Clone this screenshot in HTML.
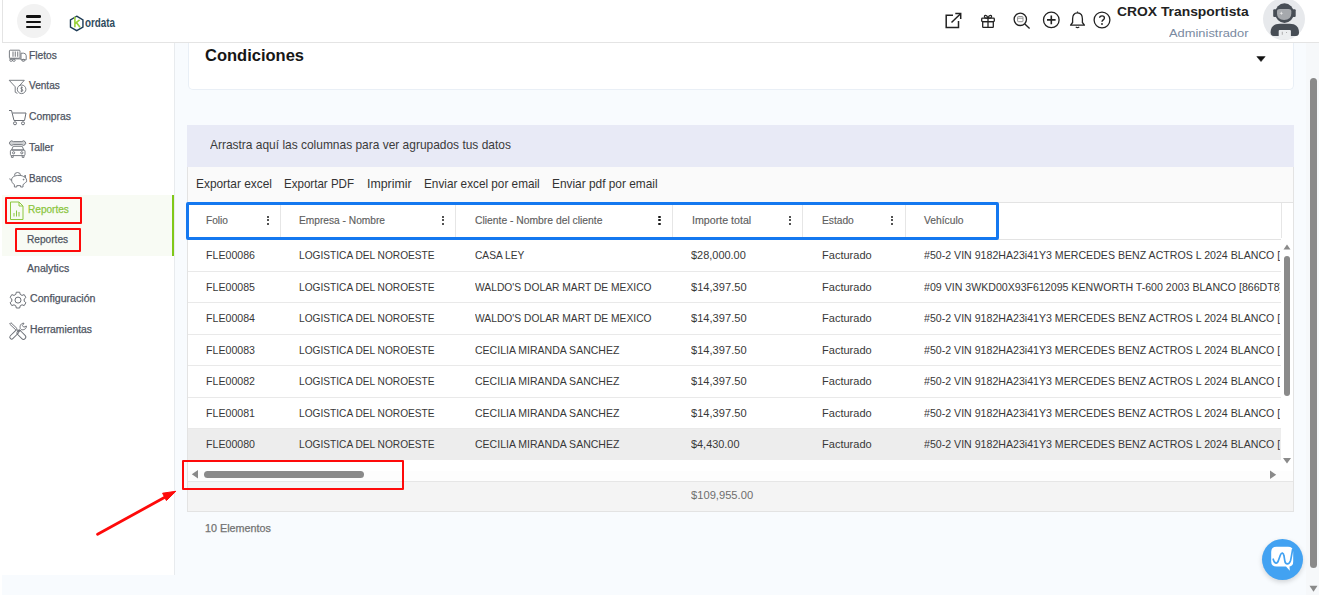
<!DOCTYPE html>
<html><head><meta charset="utf-8">
<style>
*{box-sizing:border-box;margin:0;padding:0}
html,body{width:1323px;height:595px;overflow:hidden;background:#fff;font-family:"Liberation Sans",sans-serif}
.a{position:absolute}
.t{position:absolute;white-space:nowrap;transform-origin:0 0;line-height:1}
.dots{position:absolute;width:3px;height:11px}
.dots i{position:absolute;left:0.3px;width:2.1px;height:2.1px;border-radius:50%;background:#1a1a1a}
.vsep{position:absolute;top:203px;width:1px;height:35px;background:#e6e6e6}
.rl{position:absolute;left:188px;width:1093px;height:1px;background:#e9e9e9}
svg{position:absolute;overflow:visible}
</style></head><body>

<!-- ============ page backgrounds ============ -->
<div class="a" style="left:175px;top:43px;width:1144px;height:552px;background:#f8fbfe"></div>
<div class="a" style="left:1306px;top:43px;width:13px;height:552px;background:#f6f8fa"></div>
<div class="a" style="left:2px;top:575px;width:173px;height:20px;background:#f8fbfe"></div>

<!-- ============ header ============ -->
<div class="a" style="left:2px;top:0;width:1317px;height:43px;background:#fff;border-left:1px solid #e4e4e4;border-bottom:1px solid #e4e4e4"></div>
<div class="a" style="left:17px;top:4px;width:34px;height:34px;border-radius:50%;background:#f2f2f2"></div>
<div class="a" style="left:26.2px;top:15.2px;width:15px;height:2.6px;background:#111;border-radius:1.3px"></div>
<div class="a" style="left:26.2px;top:20.5px;width:15px;height:2.6px;background:#111;border-radius:1.3px"></div>
<div class="a" style="left:26.2px;top:25.9px;width:15px;height:2.6px;background:#111;border-radius:1.3px"></div>

<!-- logo -->
<svg style="left:0;top:0" width="130" height="42">
  <polygon points="76.7,16.2 82.94,19.8 82.94,27 76.7,30.6 70.46,27 70.46,19.8" fill="none" stroke="#1d3b55" stroke-width="1.4"/>
  <path d="M74.9,16.7 V27.3 M75,23.6 L79.6,19.8 M76.4,22.5 L80,27.3" stroke="#9ad23a" stroke-width="1.6" fill="none"/>
</svg>
<div class="t" id="logo" style="left:84.9px;top:15.6px;font-size:13.2px;font-weight:700;color:#2f4c60;transform:scaleX(0.745)">ordata</div>

<!-- header icons -->
<svg style="left:944px;top:12px" width="20" height="18" viewBox="0 0 20 18">
  <path d="M9,3.2 H2.2 V15.5 H14.5 V9" fill="none" stroke="#222" stroke-width="1.5"/>
  <path d="M7.5,10.5 L16.3,2" stroke="#222" stroke-width="1.5"/>
  <path d="M11.3,1.6 H16.7 V7" fill="none" stroke="#222" stroke-width="1.5"/>
</svg>
<svg style="left:980px;top:13px" width="16" height="16" viewBox="0 0 16 16">
  <rect x="1.7" y="5.2" width="12.6" height="3.4" rx="0.8" fill="none" stroke="#222" stroke-width="1.3"/>
  <rect x="2.7" y="8.6" width="10.6" height="5.8" rx="0.6" fill="none" stroke="#222" stroke-width="1.3"/>
  <path d="M8,5.2 V14.4" stroke="#222" stroke-width="1.3"/>
  <path d="M8,5 C6.8,1.6 3.6,1.8 4.6,4.2 C5,5 7,5.1 8,5 C9,5.1 11,5 11.4,4.2 C12.4,1.8 9.2,1.6 8,5" fill="none" stroke="#222" stroke-width="1.2"/>
</svg>
<svg style="left:1013px;top:12px" width="18" height="18" viewBox="0 0 18 18">
  <circle cx="7.3" cy="7.3" r="6.2" fill="none" stroke="#222" stroke-width="1.3"/>
  <path d="M11.8,12 L16.6,16.6" stroke="#222" stroke-width="1.4"/>
  <rect x="4.6" y="4.5" width="5.4" height="5.2" rx="0.8" fill="none" stroke="#888" stroke-width="0.9"/>
  <path d="M4.6,6.2 H10" stroke="#888" stroke-width="0.9"/>
</svg>
<svg style="left:1042px;top:11px" width="19" height="18" viewBox="0 0 19 18">
  <circle cx="9.3" cy="8.9" r="7.8" fill="none" stroke="#222" stroke-width="1.3"/>
  <path d="M9.3,4.6 V13.2 M5,8.9 H13.6" stroke="#222" stroke-width="1.6"/>
</svg>
<svg style="left:1069px;top:11px" width="17" height="18" viewBox="0 0 17 18">
  <path d="M8.5,1.8 C4.8,1.8 3.6,4.8 3.6,8 V11.5 L1.6,14.2 H15.4 L13.4,11.5 V8 C13.4,4.8 12.2,1.8 8.5,1.8 Z" fill="none" stroke="#222" stroke-width="1.3" stroke-linejoin="round"/>
  <path d="M8.5,0.6 V1.8 M6.8,15.8 Q8.5,17.6 10.2,15.8" fill="none" stroke="#222" stroke-width="1.2"/>
</svg>
<svg style="left:1093px;top:11px" width="18" height="18" viewBox="0 0 18 18">
  <circle cx="9" cy="9" r="7.9" fill="none" stroke="#222" stroke-width="1.3"/>
  <path d="M6.6,6.8 C6.6,4.2 11.4,4.2 11.4,6.9 C11.4,8.9 9,8.9 9,10.8" fill="none" stroke="#222" stroke-width="1.4"/>
  <circle cx="9" cy="13" r="0.9" fill="#222"/>
</svg>

<!-- avatar -->
<div class="a" style="left:1263px;top:-1.8px;width:42px;height:42px;border-radius:50%;background:#e7e9ec"></div>
<svg style="left:1263px;top:0" width="42" height="42" viewBox="0 0 42 42">
  <rect x="10.2" y="9.2" width="3.2" height="7.8" rx="1" fill="#474d55"/>
  <rect x="29.5" y="9.2" width="3.2" height="7.8" rx="1" fill="#474d55"/>
  <ellipse cx="21.5" cy="13.1" rx="9.4" ry="9.8" fill="#474d55"/>
  <path d="M14,11.3 Q14,8.9 16.8,8.9 H25.5 Q28.3,8.9 28.3,11.3 V13.5 Q28.3,20 21.1,20 Q14,20 14,13.5 Z" fill="#a6a9ad"/>
  <path d="M18.3,11.3 L18.8,12.8 L20.3,13.3 L18.8,13.8 L18.3,15.3 L17.8,13.8 L16.3,13.3 L17.8,12.8 Z" fill="#e8e8e8"/>
  <path d="M7.6,32.5 C7.6,27 11,23.7 17,23.7 H26.6 C32.6,23.7 36,27 36,32.5 Q36,35.9 33,35.9 H10.6 Q7.6,35.9 7.6,32.5 Z" fill="#474d55"/>
  <rect x="15.7" y="30" width="12.2" height="9" rx="1" fill="#eceef0"/>
  <path d="M19.3,31.8 V34.8 M23.5,32 V33" stroke="#a0a0a0" stroke-width="0.8"/>
</svg>

<!-- ============ sidebar ============ -->
<div class="a" style="left:2px;top:43px;width:173px;height:532px;background:#fff;border-right:1px solid #e8ebee"></div>
<div class="a" style="left:2px;top:195.3px;width:170px;height:60.5px;background:#f8fbf4"></div>
<div class="a" style="left:172px;top:195.3px;width:2px;height:60.5px;background:#80c81a"></div>

<!-- sidebar icons -->
<g></g>
<svg style="left:8px;top:48px" width="20" height="16" viewBox="0 0 20 16">
  <g fill="none" stroke="#6b6f76" stroke-width="0.9">
    <rect x="1.4" y="2.2" width="10.6" height="8" rx="0.8"/>
    <path d="M5,3.6 V8.8 M7.3,3.6 V8.8 M9.7,3.6 V8.8" stroke="#8a8d92" stroke-width="1.2"/>
    <path d="M13,5.2 H15.6 Q17.9,5.2 18.2,7.6 V11.8 H13 Z"/>
    <path d="M1.2,10.9 H13"/>
    <rect x="1.8" y="11.3" width="2.6" height="2" rx="1"/><rect x="4.6" y="11.3" width="2.6" height="2" rx="1"/><rect x="14" y="11.3" width="2.8" height="2" rx="1"/>
  </g>
</svg>
<svg style="left:8px;top:78px" width="20" height="18" viewBox="0 0 20 18">
  <g fill="none" stroke="#6b6f76" stroke-width="0.9">
    <path d="M1.2,2.3 H16.3 L11.2,8 M1.2,2.3 L7.2,8.8 V14.2 L9.4,15.4"/>
    <circle cx="13.6" cy="11.3" r="4.3"/>
    <path d="M14.6,9.5 C13.8,8.9 12.7,9.3 12.9,10.3 C13.1,11.2 14.8,11.2 14.8,12.3 C14.8,13.3 13.5,13.6 12.6,13 M13.7,8.5 V14.2"/>
  </g>
</svg>
<svg style="left:8px;top:109px" width="20" height="18" viewBox="0 0 20 18">
  <g fill="none" stroke="#6b6f76" stroke-width="1">
    <path d="M1,1.5 H3.5 L6,11.5 H16.5 L18,4 H4.5"/>
    <circle cx="7" cy="14.3" r="1.5"/><circle cx="15" cy="14.3" r="1.5"/>
  </g>
</svg>
<svg style="left:8px;top:138px" width="20" height="21" viewBox="0 0 20 21">
  <g fill="none" stroke="#6b6f76" stroke-width="0.9">
    <path d="M5.3,3.6 H13.9 A2.2,2.2 0 1 1 13.9,6.6 H5.3 A2.2,2.2 0 1 1 5.3,3.6 Z" fill="#d0d2d4"/>
    <path d="M5.2,8.3 H14.2 L15.8,12 H3.6 Z"/>
    <rect x="2.4" y="12" width="14.6" height="5.6" rx="1.2"/>
    <circle cx="5.6" cy="14.8" r="1.1"/><circle cx="13.8" cy="14.8" r="1.1"/>
    <path d="M3.4,17.6 V19.4 H5.2 V17.6 M14.2,17.6 V19.4 H16 V17.6"/>
  </g>
</svg>
<svg style="left:8px;top:170px" width="20" height="19" viewBox="0 0 20 19">
  <g fill="none" stroke="#6b6f76" stroke-width="0.9">
    <path d="M6.4,5.6 A3.1,3.1 0 0 1 12.6,5.6"/>
    <path d="M3.6,10 C3.6,6.8 7,5.4 11,5.4 C13.6,5.4 15.4,6 16.4,7.4 L17.2,5 L17.6,8 C18.2,8.6 18.6,9.4 18.6,10.2 V11.8 L17.4,12.4 C16.8,13.4 16.2,14 15,14.6 V17 H12.6 V15.6 H8.8 V17 H6.4 V14.6 C4.6,13.6 3.6,12 3.6,10 Z"/>
    <path d="M3.6,10 C2.4,10.2 1.6,9.4 1.8,8.4"/>
    <circle cx="15.6" cy="9.6" r="0.45" fill="#6b6f76"/>
  </g>
</svg>
<svg style="left:9px;top:201px" width="16" height="20" viewBox="0 0 16 20">
  <g fill="none" stroke="#8cc63f" stroke-width="1">
    <path d="M1.5,1 H10 L14,5 V18.5 H1.5 Z"/>
    <path d="M10,1 V5 H14"/>
    <path d="M5,15.5 V12 M7.5,15.5 V9.5 M10,15.5 V11"/>
  </g>
</svg>
<svg style="left:9px;top:291px" width="18" height="19" viewBox="0 0 18 19">
  <g fill="none" stroke="#6b6f76" stroke-width="1">
    <path d="M7.3,1.2 H10.7 L11.2,3.4 L13,4.4 L15.2,3.6 L16.9,6.5 L15.2,8 V10.2 L16.9,11.7 L15.2,14.6 L13,13.8 L11.2,14.8 L10.7,17 H7.3 L6.8,14.8 L5,13.8 L2.8,14.6 L1.1,11.7 L2.8,10.2 V8 L1.1,6.5 L2.8,3.6 L5,4.4 L6.8,3.4 Z" stroke-linejoin="round"/>
    <circle cx="9" cy="9.1" r="3"/>
  </g>
</svg>
<svg style="left:8px;top:321px" width="20" height="20" viewBox="0 0 20 20">
  <g fill="none" stroke="#6b6f76" stroke-width="0.95">
    <path d="M1.6,3 L2.9,1.7 L8.9,7.4 L7.6,8.7 Z"/>
    <rect x="-2.3" y="-5.2" width="4.6" height="10.4" rx="2.3" transform="translate(13.4,13.9) rotate(-45)"/>
    <rect x="-1.9" y="-5.6" width="3.8" height="11.2" rx="1.9" transform="translate(6.3,13.5) rotate(45)"/>
    <path d="M10,9.7 L12.3,7.4 C11.4,4.6 13.2,2 16,2.2 L14.4,4.6 L15.8,6.2 L18.4,5 C18.6,7.8 15.8,9.4 13.2,8.6 L11.2,10.8"/>
  </g>
</svg>

<!-- ============ main card ============ -->
<div class="a" style="left:187.5px;top:43px;width:1106.5px;height:47px;background:#fff;border:1px solid #e9eff6;border-top:none;border-radius:0 0 5px 5px"></div>
<svg style="left:1256px;top:56px" width="10" height="7" viewBox="0 0 10 7"><path d="M0.8,0.6 H9.2 L5,5.6 Z" fill="#111" stroke="#111" stroke-width="0.5" stroke-linejoin="round"/></svg>

<!-- ============ grid ============ -->
<div class="a" style="left:187px;top:125px;width:1107px;height:387px;background:#fff;border:1px solid #e3e3e3"></div>
<div class="a" style="left:187px;top:125px;width:1107px;height:42px;background:#e8eaf6"></div>
<div class="a" style="left:188px;top:167px;width:1105px;height:35px;background:#fafafa"></div>
<div class="a" style="left:188px;top:202px;width:1105px;height:1px;background:#e3e3e3"></div>
<div class="a" style="left:188px;top:238.5px;width:1105px;height:1px;background:#e3e3e3"></div>
<div class="vsep" style="left:280px"></div>
<div class="vsep" style="left:455px"></div>
<div class="vsep" style="left:672px"></div>
<div class="vsep" style="left:802px"></div>
<div class="vsep" style="left:905px"></div>
<div class="vsep" style="left:1281px"></div>
<div class="dots" style="left:266.3px;top:215px"><i style="top:1px"></i><i style="top:4.4px"></i><i style="top:7.8px"></i></div>
<div class="dots" style="left:441.4px;top:215px"><i style="top:1px"></i><i style="top:4.4px"></i><i style="top:7.8px"></i></div>
<div class="dots" style="left:658.2px;top:215px"><i style="top:1px"></i><i style="top:4.4px"></i><i style="top:7.8px"></i></div>
<div class="dots" style="left:788.6px;top:215px"><i style="top:1px"></i><i style="top:4.4px"></i><i style="top:7.8px"></i></div>
<div class="dots" style="left:890.9px;top:215px"><i style="top:1px"></i><i style="top:4.4px"></i><i style="top:7.8px"></i></div>

<!-- rows -->
<div class="a" style="left:188px;top:428px;width:1093px;height:31.5px;background:#ededed"></div>
<div class="rl" style="top:270.5px"></div>
<div class="rl" style="top:302px"></div>
<div class="rl" style="top:333.5px"></div>
<div class="rl" style="top:365px"></div>
<div class="rl" style="top:396.5px"></div>
<div class="rl" style="top:428px"></div>

<!-- footer -->
<div class="a" style="left:188px;top:460px;width:1105px;height:21px;background:#fdfdfd"></div>
<div class="a" style="left:188px;top:460px;width:1105px;height:11px;background:#fff"></div>
<div class="a" style="left:188px;top:481px;width:1105px;height:1px;background:#e6e6e6"></div>
<div class="a" style="left:188px;top:482px;width:1105px;height:29px;background:#f4f4f4"></div>

<div class='t' id='m0' style='left:1116.60px;top:4.59px;font-size:13.6px;font-weight:700;color:#222;transform:scaleX(1.0196);'>CROX Transportista</div>
<div class='t' id='m1' style='left:1169.00px;top:26.90px;font-size:11.7px;font-weight:400;color:#7a8aa1;transform:scaleX(1.1025);'>Administrador</div>
<div class='t' id='m2' style='left:205.00px;top:47.43px;font-size:16.5px;font-weight:700;color:#161616;transform:scaleX(0.9998);'>Condiciones</div>
<div class='t' id='m3' style='left:29.20px;top:50.73px;font-size:10px;font-weight:400;color:#4f5562;transform:scaleX(1.0208);-webkit-text-stroke:0.25px #4f5562;'>Fletos</div>
<div class='t' id='m4' style='left:29.20px;top:81.33px;font-size:10px;font-weight:400;color:#4f5562;transform:scaleX(1.0067);-webkit-text-stroke:0.25px #4f5562;'>Ventas</div>
<div class='t' id='m5' style='left:29.20px;top:112.13px;font-size:10px;font-weight:400;color:#4f5562;transform:scaleX(1.0350);-webkit-text-stroke:0.25px #4f5562;'>Compras</div>
<div class='t' id='m6' style='left:29.20px;top:143.03px;font-size:10px;font-weight:400;color:#4f5562;transform:scaleX(1.0374);-webkit-text-stroke:0.25px #4f5562;'>Taller</div>
<div class='t' id='m7' style='left:29.40px;top:173.94px;font-size:10px;font-weight:400;color:#4f5562;transform:scaleX(0.9832);-webkit-text-stroke:0.25px #4f5562;'>Bancos</div>
<div class='t' id='m8' style='left:27.70px;top:204.94px;font-size:10px;font-weight:400;color:#8cc63f;transform:scaleX(1.0079);-webkit-text-stroke:0.25px #8cc63f;'>Reportes</div>
<div class='t' id='m9' style='left:26.90px;top:235.03px;font-size:10px;font-weight:400;color:#4f5562;transform:scaleX(1.0129);-webkit-text-stroke:0.25px #4f5562;'>Reportes</div>
<div class='t' id='m10' style='left:26.90px;top:264.44px;font-size:10px;font-weight:400;color:#4f5562;transform:scaleX(1.0546);-webkit-text-stroke:0.25px #4f5562;'>Analytics</div>
<div class='t' id='m11' style='left:29.50px;top:293.74px;font-size:10px;font-weight:400;color:#4f5562;transform:scaleX(1.0613);-webkit-text-stroke:0.25px #4f5562;'>Configuración</div>
<div class='t' id='m12' style='left:29.50px;top:324.74px;font-size:10px;font-weight:400;color:#4f5562;transform:scaleX(1.0328);-webkit-text-stroke:0.25px #4f5562;'>Herramientas</div>
<div class='t' id='m13' style='left:209.60px;top:138.86px;font-size:12.8px;font-weight:400;color:#3b3b3b;transform:scaleX(0.9338);'>Arrastra aquí las columnas para ver agrupados tus datos</div>
<div class='t' id='m14' style='left:196.20px;top:177.83px;font-size:12.6px;font-weight:400;color:#333;transform:scaleX(0.9441);'>Exportar excel</div>
<div class='t' id='m15' style='left:284.40px;top:177.83px;font-size:12.6px;font-weight:400;color:#333;transform:scaleX(0.9175);'>Exportar PDF</div>
<div class='t' id='m16' style='left:366.60px;top:177.83px;font-size:12.6px;font-weight:400;color:#333;transform:scaleX(0.9787);'>Imprimir</div>
<div class='t' id='m17' style='left:423.90px;top:177.83px;font-size:12.6px;font-weight:400;color:#333;transform:scaleX(0.9339);'>Enviar excel por email</div>
<div class='t' id='m18' style='left:552.40px;top:177.83px;font-size:12.6px;font-weight:400;color:#333;transform:scaleX(0.9429);'>Enviar pdf por email</div>
<div class='t' id='m19' style='left:206.00px;top:215.03px;font-size:10.6px;font-weight:400;color:#5e5e5e;transform:scaleX(0.9578);-webkit-text-stroke:0.15px #5e5e5e;'>Folio</div>
<div class='t' id='m20' style='left:299.20px;top:215.03px;font-size:10.6px;font-weight:400;color:#5e5e5e;transform:scaleX(0.9611);-webkit-text-stroke:0.15px #5e5e5e;'>Empresa - Nombre</div>
<div class='t' id='m21' style='left:474.50px;top:215.03px;font-size:10.6px;font-weight:400;color:#5e5e5e;transform:scaleX(0.9746);-webkit-text-stroke:0.15px #5e5e5e;'>Cliente - Nombre del cliente</div>
<div class='t' id='m22' style='left:691.50px;top:215.03px;font-size:10.6px;font-weight:400;color:#5e5e5e;transform:scaleX(1.0053);-webkit-text-stroke:0.15px #5e5e5e;'>Importe total</div>
<div class='t' id='m23' style='left:821.50px;top:215.03px;font-size:10.6px;font-weight:400;color:#5e5e5e;transform:scaleX(0.9641);-webkit-text-stroke:0.15px #5e5e5e;'>Estado</div>
<div class='t' id='m24' style='left:923.80px;top:215.03px;font-size:10.6px;font-weight:400;color:#5e5e5e;transform:scaleX(0.9716);-webkit-text-stroke:0.15px #5e5e5e;'>Vehículo</div>
<div class='t' id='m25' style='left:206.00px;top:249.97px;font-size:11.5px;font-weight:400;color:#383838;transform:scaleX(0.9232);'>FLE00086</div>
<div class='t' id='m26' style='left:299.20px;top:249.97px;font-size:11.5px;font-weight:400;color:#383838;transform:scaleX(0.8828);'>LOGISTICA DEL NOROESTE</div>
<div class='t' id='m27' style='left:474.50px;top:249.97px;font-size:11.5px;font-weight:400;color:#383838;transform:scaleX(0.8863);'>CASA LEY</div>
<div class='t' id='m28' style='left:691.30px;top:249.97px;font-size:11.5px;font-weight:400;color:#383838;transform:scaleX(0.9520);'>$28,000.00</div>
<div class='t' id='m29' style='left:821.50px;top:249.97px;font-size:11.5px;font-weight:400;color:#383838;transform:scaleX(0.9598);'>Facturado</div>
<div class='a' style='left:924.40px;top:247.97px;width:355.60px;height:16.5px;overflow:hidden'><div class='t' style='left:0;top:2px;font-size:11.5px;font-weight:400;color:#383838;transform:scaleX(0.9221);'>#50-2 VIN 9182HA23i41Y3 MERCEDES BENZ ACTROS L 2024 BLANCO [864JW9]</div></div>
<div class='t' id='m31' style='left:206.00px;top:281.52px;font-size:11.5px;font-weight:400;color:#383838;transform:scaleX(0.9232);'>FLE00085</div>
<div class='t' id='m32' style='left:299.20px;top:281.52px;font-size:11.5px;font-weight:400;color:#383838;transform:scaleX(0.8828);'>LOGISTICA DEL NOROESTE</div>
<div class='t' id='m33' style='left:474.50px;top:281.52px;font-size:11.5px;font-weight:400;color:#383838;transform:scaleX(0.8940);'>WALDO&#x27;S DOLAR MART DE MEXICO</div>
<div class='t' id='m34' style='left:691.30px;top:281.52px;font-size:11.5px;font-weight:400;color:#383838;transform:scaleX(0.9659);'>$14,397.50</div>
<div class='t' id='m35' style='left:821.50px;top:281.52px;font-size:11.5px;font-weight:400;color:#383838;transform:scaleX(0.9598);'>Facturado</div>
<div class='a' style='left:924.40px;top:279.52px;width:355.60px;height:16.5px;overflow:hidden'><div class='t' style='left:0;top:2px;font-size:11.5px;font-weight:400;color:#383838;transform:scaleX(0.9221);'>#09 VIN 3WKD00X93F612095 KENWORTH T-600 2003 BLANCO [866DT8]</div></div>
<div class='t' id='m37' style='left:206.00px;top:313.07px;font-size:11.5px;font-weight:400;color:#383838;transform:scaleX(0.9232);'>FLE00084</div>
<div class='t' id='m38' style='left:299.20px;top:313.07px;font-size:11.5px;font-weight:400;color:#383838;transform:scaleX(0.8828);'>LOGISTICA DEL NOROESTE</div>
<div class='t' id='m39' style='left:474.50px;top:313.07px;font-size:11.5px;font-weight:400;color:#383838;transform:scaleX(0.8940);'>WALDO&#x27;S DOLAR MART DE MEXICO</div>
<div class='t' id='m40' style='left:691.30px;top:313.07px;font-size:11.5px;font-weight:400;color:#383838;transform:scaleX(0.9659);'>$14,397.50</div>
<div class='t' id='m41' style='left:821.50px;top:313.07px;font-size:11.5px;font-weight:400;color:#383838;transform:scaleX(0.9598);'>Facturado</div>
<div class='a' style='left:924.40px;top:311.07px;width:355.60px;height:16.5px;overflow:hidden'><div class='t' style='left:0;top:2px;font-size:11.5px;font-weight:400;color:#383838;transform:scaleX(0.9221);'>#50-2 VIN 9182HA23i41Y3 MERCEDES BENZ ACTROS L 2024 BLANCO [864JW9]</div></div>
<div class='t' id='m43' style='left:206.00px;top:344.62px;font-size:11.5px;font-weight:400;color:#383838;transform:scaleX(0.9232);'>FLE00083</div>
<div class='t' id='m44' style='left:299.20px;top:344.62px;font-size:11.5px;font-weight:400;color:#383838;transform:scaleX(0.8828);'>LOGISTICA DEL NOROESTE</div>
<div class='t' id='m45' style='left:474.50px;top:344.62px;font-size:11.5px;font-weight:400;color:#383838;transform:scaleX(0.9148);'>CECILIA MIRANDA SANCHEZ</div>
<div class='t' id='m46' style='left:691.30px;top:344.62px;font-size:11.5px;font-weight:400;color:#383838;transform:scaleX(0.9659);'>$14,397.50</div>
<div class='t' id='m47' style='left:821.50px;top:344.62px;font-size:11.5px;font-weight:400;color:#383838;transform:scaleX(0.9598);'>Facturado</div>
<div class='a' style='left:924.40px;top:342.62px;width:355.60px;height:16.5px;overflow:hidden'><div class='t' style='left:0;top:2px;font-size:11.5px;font-weight:400;color:#383838;transform:scaleX(0.9221);'>#50-2 VIN 9182HA23i41Y3 MERCEDES BENZ ACTROS L 2024 BLANCO [864JW9]</div></div>
<div class='t' id='m49' style='left:206.00px;top:376.17px;font-size:11.5px;font-weight:400;color:#383838;transform:scaleX(0.9232);'>FLE00082</div>
<div class='t' id='m50' style='left:299.20px;top:376.17px;font-size:11.5px;font-weight:400;color:#383838;transform:scaleX(0.8828);'>LOGISTICA DEL NOROESTE</div>
<div class='t' id='m51' style='left:474.50px;top:376.17px;font-size:11.5px;font-weight:400;color:#383838;transform:scaleX(0.9148);'>CECILIA MIRANDA SANCHEZ</div>
<div class='t' id='m52' style='left:691.30px;top:376.17px;font-size:11.5px;font-weight:400;color:#383838;transform:scaleX(0.9659);'>$14,397.50</div>
<div class='t' id='m53' style='left:821.50px;top:376.17px;font-size:11.5px;font-weight:400;color:#383838;transform:scaleX(0.9598);'>Facturado</div>
<div class='a' style='left:924.40px;top:374.17px;width:355.60px;height:16.5px;overflow:hidden'><div class='t' style='left:0;top:2px;font-size:11.5px;font-weight:400;color:#383838;transform:scaleX(0.9221);'>#50-2 VIN 9182HA23i41Y3 MERCEDES BENZ ACTROS L 2024 BLANCO [864JW9]</div></div>
<div class='t' id='m55' style='left:206.00px;top:407.72px;font-size:11.5px;font-weight:400;color:#383838;transform:scaleX(0.9232);'>FLE00081</div>
<div class='t' id='m56' style='left:299.20px;top:407.72px;font-size:11.5px;font-weight:400;color:#383838;transform:scaleX(0.8828);'>LOGISTICA DEL NOROESTE</div>
<div class='t' id='m57' style='left:474.50px;top:407.72px;font-size:11.5px;font-weight:400;color:#383838;transform:scaleX(0.9148);'>CECILIA MIRANDA SANCHEZ</div>
<div class='t' id='m58' style='left:691.30px;top:407.72px;font-size:11.5px;font-weight:400;color:#383838;transform:scaleX(0.9659);'>$14,397.50</div>
<div class='t' id='m59' style='left:821.50px;top:407.72px;font-size:11.5px;font-weight:400;color:#383838;transform:scaleX(0.9598);'>Facturado</div>
<div class='a' style='left:924.40px;top:405.72px;width:355.60px;height:16.5px;overflow:hidden'><div class='t' style='left:0;top:2px;font-size:11.5px;font-weight:400;color:#383838;transform:scaleX(0.9221);'>#50-2 VIN 9182HA23i41Y3 MERCEDES BENZ ACTROS L 2024 BLANCO [864JW9]</div></div>
<div class='t' id='m61' style='left:206.00px;top:439.27px;font-size:11.5px;font-weight:400;color:#383838;transform:scaleX(0.9232);'>FLE00080</div>
<div class='t' id='m62' style='left:299.20px;top:439.27px;font-size:11.5px;font-weight:400;color:#383838;transform:scaleX(0.8828);'>LOGISTICA DEL NOROESTE</div>
<div class='t' id='m63' style='left:474.50px;top:439.27px;font-size:11.5px;font-weight:400;color:#383838;transform:scaleX(0.9148);'>CECILIA MIRANDA SANCHEZ</div>
<div class='t' id='m64' style='left:691.30px;top:439.27px;font-size:11.5px;font-weight:400;color:#383838;transform:scaleX(0.9478);'>$4,430.00</div>
<div class='t' id='m65' style='left:821.50px;top:439.27px;font-size:11.5px;font-weight:400;color:#383838;transform:scaleX(0.9598);'>Facturado</div>
<div class='a' style='left:924.40px;top:437.27px;width:355.60px;height:16.5px;overflow:hidden'><div class='t' style='left:0;top:2px;font-size:11.5px;font-weight:400;color:#383838;transform:scaleX(0.9221);'>#50-2 VIN 9182HA23i41Y3 MERCEDES BENZ ACTROS L 2024 BLANCO [864JW9]</div></div>
<div class='t' id='m67' style='left:691.30px;top:489.57px;font-size:11.5px;font-weight:400;color:#6e6e6e;transform:scaleX(0.9710);'>$109,955.00</div>
<div class='t' id='m68' style='left:205.00px;top:522.61px;font-size:10.5px;font-weight:400;color:#737373;transform:scaleX(1.0277);-webkit-text-stroke:0.25px #737373;'>10 Elementos</div>

<!-- inner vertical scrollbar (covers overflow) -->
<div class="a" style="left:1281px;top:239px;width:12px;height:221px;background:#fff"></div>
<svg style="left:1282px;top:242px" width="10" height="10" viewBox="0 0 10 10"><path d="M1.5,7.5 H8.5 L5,2.5 Z" fill="#8a8a8a"/></svg>
<div class="a" style="left:1283.6px;top:255.7px;width:6.8px;height:140.3px;border-radius:3.4px;background:#8a8a8a"></div>
<svg style="left:1282px;top:456px" width="10" height="10" viewBox="0 0 10 10"><path d="M1,2 H9 L5,7.5 Z" fill="#8a8a8a"/></svg>
<!-- horizontal scrollbar -->
<svg style="left:189px;top:468px" width="12" height="12" viewBox="0 0 12 12"><path d="M9,2 V10.5 L2.8,6.2 Z" fill="#8a8a8a"/></svg>
<div class="a" style="left:203.8px;top:470.5px;width:160.5px;height:7.4px;border-radius:3.7px;background:#8a8a8a"></div>
<svg style="left:1267px;top:468px" width="12" height="12" viewBox="0 0 12 12"><path d="M3,2.5 V11 L9.2,6.7 Z" fill="#8a8a8a"/></svg>

<!-- blue highlight box -->
<div class="a" style="left:186px;top:201.6px;width:813px;height:38.3px;border:3px solid #1478f0;border-radius:2px"></div>

<!-- red boxes -->
<div class="a" style="left:4.5px;top:197px;width:77.5px;height:27.2px;border:2.6px solid #fe0a0a;border-radius:1px"></div>
<div class="a" style="left:14.6px;top:228px;width:66.4px;height:23.8px;border:2.6px solid #fe0a0a;border-radius:1px"></div>
<div class="a" style="left:182.2px;top:459.6px;width:221.5px;height:30.6px;border:2.6px solid #fe0a0a;border-radius:1px"></div>

<!-- red arrow -->
<svg style="left:0;top:0" width="200" height="560">
  <path d="M97.6,534.3 L168,495.5" stroke="#fe0a0a" stroke-width="2.8" stroke-linecap="round"/>
  <polygon points="175.8,491.3 162.6,493.2 166.4,500.6" fill="#fe0a0a" stroke="#fe0a0a" stroke-width="1" stroke-linejoin="round"/>
</svg>

<!-- page scrollbar -->
<div class="a" style="left:1309.5px;top:78px;width:7.7px;height:490px;border-radius:3.85px;background:#8a8a8a"></div>
<svg style="left:1308px;top:584px" width="11" height="10" viewBox="0 0 11 10"><path d="M1.5,1.8 H9.5 L5.5,7.8 Z" fill="#8a8a8a"/></svg>

<!-- chat bubble -->
<div class="a" style="left:1262.3px;top:538.6px;width:41px;height:41px;border-radius:50%;background:#42a2f2;box-shadow:0 2px 5px rgba(0,0,0,0.16)"></div>
<svg style="left:1262.3px;top:538.6px" width="41" height="41" viewBox="0 0 41 41">
  <path d="M14.5,7.8 H26 Q31.2,7.8 31.2,13 V22.5 Q31.2,27.2 27.5,27.5 L27.8,31.8 L24,27.5 H14.5 Q9.2,27.5 9.2,22.5 V13 Q9.2,7.8 14.5,7.8 Z" fill="#fff"/>
  <path d="M11.2,20.2 C12.5,25 15.3,25.5 16.6,21 L18.4,16 C19.5,13 21.6,13.6 22,17 L22.8,21.8 C23.4,25.8 27,26 28.5,21.8 C29.3,19 29.8,15 30.6,10.5" fill="none" stroke="#42a2f2" stroke-width="1.7" stroke-linecap="round"/>
</svg>

</body></html>
